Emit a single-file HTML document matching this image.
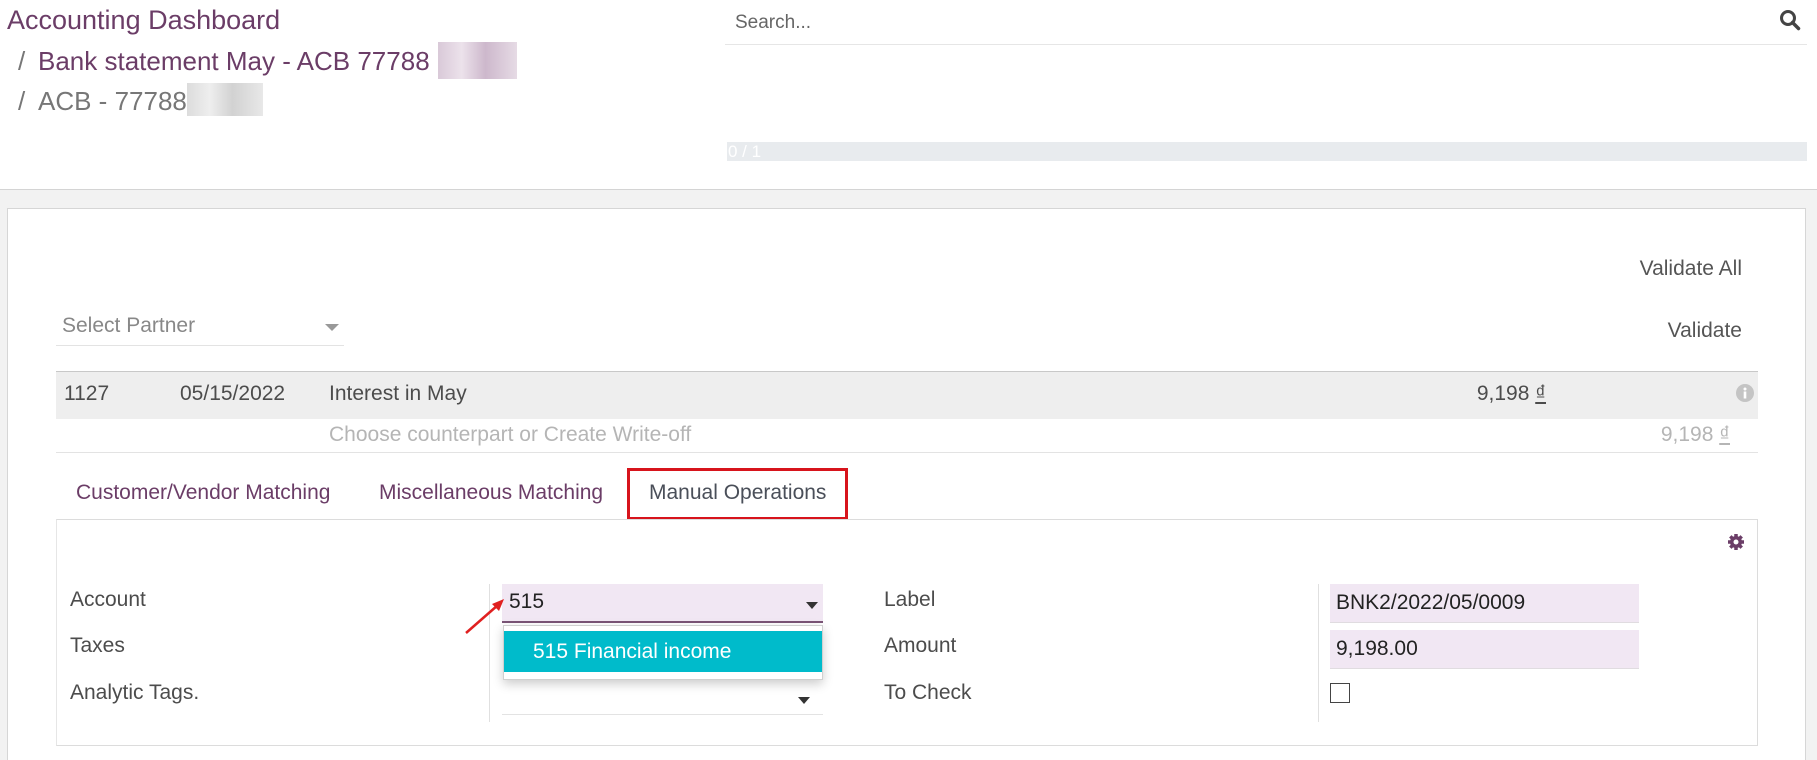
<!DOCTYPE html>
<html><head><meta charset="utf-8">
<style>
*{margin:0;padding:0;box-sizing:border-box}
html{width:1817px;height:760px;overflow:hidden}
body{width:1817px;height:760px;overflow:hidden;background:#fff;font-family:"Liberation Sans",Arial,sans-serif;color:#4c4c4c;position:relative}
.a{position:absolute;white-space:nowrap}
.p{color:#6b3d67}
.blur{position:absolute;background:linear-gradient(90deg,#d9c9d8,#ece2eb 30%,#cdb8cc 60%,#e6dbe5)}
.blurg{position:absolute;background:linear-gradient(90deg,#dcdcdc,#eeeeee 30%,#d2d2d2 60%,#e8e8e8)}
.f20{font-size:21px}
</style></head><body>
<div class="a p" style="left:7px;top:5px;font-size:27px">Accounting Dashboard</div>
<div class="a" style="left:18px;top:46px;font-size:26px;color:#777">/</div>
<div class="a p" style="left:38px;top:46px;font-size:26px">Bank statement May - ACB 77788</div>
<div class="blur" style="left:438px;top:42px;width:79px;height:37px"></div>
<div class="a" style="left:18px;top:86px;font-size:26px;color:#777">/</div>
<div class="a" style="left:38px;top:86px;font-size:26px;color:#777">ACB - 77788</div>
<div class="blurg" style="left:187px;top:83px;width:76px;height:33px"></div>

<div class="a" style="left:735px;top:12px;font-size:19px;color:#666">Search...</div>
<div class="a" style="left:725px;top:44px;width:1082px;height:1px;background:#e6e6e6"></div>
<svg class="a" style="left:1779px;top:9px" width="22" height="22" viewBox="0 0 22 22"><circle cx="9" cy="9" r="6.5" fill="none" stroke="#444" stroke-width="3"/><line x1="13.5" y1="13.5" x2="19.5" y2="19.5" stroke="#444" stroke-width="3.5" stroke-linecap="round"/></svg>
<div class="a" style="left:727px;top:142px;width:1080px;height:19px;background:#e8ebee"></div>
<div class="a" style="left:728px;top:142px;font-size:17px;color:#fff">0 / 1</div>
<div class="a" style="left:0;top:189px;width:1817px;height:1px;background:#d4d4d4"></div>
<div class="a" style="left:0;top:190px;width:1817px;height:570px;background:#f2f2f2"></div>

<div class="a" style="left:7px;top:208px;width:1799px;height:552px;background:#fff;border:1px solid #d6d6d6;border-bottom:none"></div>

<div class="a f20" style="right:75px;top:257px;color:#555">Validate All</div>
<div class="a f20" style="right:75px;top:319px;color:#555">Validate</div>

<div class="a" style="left:62px;top:314px;font-size:21px;color:#888">Select Partner</div>
<svg class="a" style="left:325px;top:324px" width="14" height="8"><polygon points="0,0 14,0 7,7" fill="#999"/></svg>
<div class="a" style="left:56px;top:345px;width:288px;height:1px;background:#e3e3e3"></div>

<div class="a" style="left:56px;top:371px;width:1702px;height:48px;background:#eeeeee;border-top:1px solid #c8c8c8"></div>
<div class="a f20" style="left:64px;top:382px">1127</div>
<div class="a f20" style="left:180px;top:382px">05/15/2022</div>
<div class="a f20" style="left:329px;top:382px">Interest in May</div>
<div class="a f20" style="right:271px;top:382px">9,198 <u>₫</u></div>
<svg class="a" style="left:1736px;top:384px" width="18" height="18"><circle cx="9" cy="9" r="9" fill="#c4c4c4"/><rect x="7.7" y="7.5" width="2.6" height="7" fill="#fff"/><circle cx="9" cy="5" r="1.5" fill="#fff"/></svg>
<div class="a f20" style="left:329px;top:423px;color:#b5b5b5">Choose counterpart or Create Write-off</div>
<div class="a f20" style="right:87px;top:423px;color:#b5b5b5">9,198 <u>₫</u></div>
<div class="a" style="left:56px;top:452px;width:1702px;height:1px;background:#e3e3e3"></div>

<div class="a f20 p" style="left:76px;top:481px">Customer/Vendor Matching</div>
<div class="a f20 p" style="left:379px;top:481px">Miscellaneous Matching</div>
<div class="a" style="left:627px;top:468px;width:221px;height:52px;border:3px solid #d7141c"></div>
<div class="a f20" style="left:649px;top:481px;color:#4a4f59">Manual Operations</div>

<div class="a" style="left:56px;top:519px;width:1702px;height:227px;border:1px solid #dcdcdc;border-left-color:#e6e6e6"></div>
<svg class="a" style="left:1727px;top:533px" width="18" height="18" viewBox="0 0 18 18"><g fill="#6b3d67"><circle cx="9" cy="9" r="6"/><g stroke="#6b3d67" stroke-width="3.5"><line x1="9" y1="1" x2="9" y2="17"/><line x1="1" y1="9" x2="17" y2="9"/><line x1="3.3" y1="3.3" x2="14.7" y2="14.7"/><line x1="14.7" y1="3.3" x2="3.3" y2="14.7"/></g></g><circle cx="9" cy="9" r="2.5" fill="#fff"/></svg>

<div class="a f20" style="left:70px;top:588px">Account</div>
<div class="a f20" style="left:70px;top:634px">Taxes</div>
<div class="a f20" style="left:70px;top:681px">Analytic Tags.</div>
<div class="a" style="left:489px;top:584px;width:1px;height:138px;background:#e0e0e0"></div>

<div class="a" style="left:502px;top:584px;width:321px;height:39px;background:#f1e7f3;border-bottom:2px solid #7a5476"></div>
<div class="a f20" style="left:509px;top:590px;color:#222">515</div>
<svg class="a" style="left:806px;top:602px" width="12" height="7"><polygon points="0,0 12,0 6,7" fill="#333"/></svg>
<svg class="a" style="left:798px;top:697px" width="12" height="7"><polygon points="0,0 12,0 6,7" fill="#333"/></svg>
<div class="a" style="left:502px;top:714px;width:321px;height:1px;background:#e3e3e3"></div>
<div class="a" style="left:503px;top:625px;width:320px;height:55px;background:#fff;border:1px solid #d0d0d0;box-shadow:0 4px 10px rgba(0,0,0,.2)"></div>
<div class="a" style="left:504px;top:631px;width:318px;height:41px;background:#00bbcb"></div>
<div class="a f20" style="left:533px;top:640px;color:#fff">515 Financial income</div>
<svg class="a" style="left:462px;top:595px" width="45" height="42"><line x1="4" y1="38" x2="36" y2="10" stroke="#e02020" stroke-width="2.5"/><polygon points="42,4 30,9 37,16" fill="#e02020"/></svg>

<div class="a f20" style="left:884px;top:588px">Label</div>
<div class="a f20" style="left:884px;top:634px">Amount</div>
<div class="a f20" style="left:884px;top:681px">To Check</div>
<div class="a" style="left:1318px;top:584px;width:1px;height:138px;background:#e0e0e0"></div>
<div class="a" style="left:1330px;top:584px;width:309px;height:39px;background:#f1e7f3;border-bottom:1px solid #e0dce0"></div>
<div class="a f20" style="left:1336px;top:591px;color:#222">BNK2/2022/05/0009</div>
<div class="a" style="left:1330px;top:630px;width:309px;height:39px;background:#f1e7f3;border-bottom:1px solid #e0dce0"></div>
<div class="a f20" style="left:1336px;top:637px;color:#222">9,198.00</div>
<div class="a" style="left:1330px;top:683px;width:20px;height:20px;border:1.5px solid #444;background:#fff"></div>
</body></html>
